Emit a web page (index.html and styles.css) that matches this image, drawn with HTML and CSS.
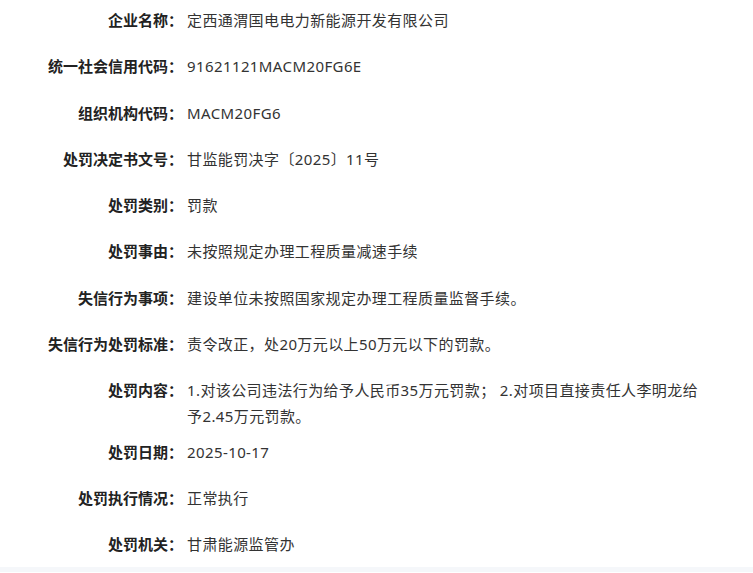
FILE: index.html
```html
<!DOCTYPE html>
<html lang="zh-CN">
<head>
	<meta charset="UTF-8">
	<title>行政处罚信息</title>
	<link rel="stylesheet" href="styles.css">
</head>
<body>
	<div class="detail">
		<div class="row"><span class="label">企业名称：</span><span class="value">定西通渭国电电力新能源开发有限公司</span></div>
		<div class="row"><span class="label">统一社会信用代码：</span><span class="value">91621121MACM20FG6E</span></div>
		<div class="row"><span class="label">组织机构代码：</span><span class="value">MACM20FG6</span></div>
		<div class="row"><span class="label">处罚决定书文号：</span><span class="value">甘监能罚决字〔2025〕11号</span></div>
		<div class="row"><span class="label">处罚类别：</span><span class="value">罚款</span></div>
		<div class="row"><span class="label">处罚事由：</span><span class="value">未按照规定办理工程质量减速手续</span></div>
		<div class="row"><span class="label">失信行为事项：</span><span class="value">建设单位未按照国家规定办理工程质量监督手续。</span></div>
		<div class="row"><span class="label">失信行为处罚标准：</span><span class="value">责令改正，处20万元以上50万元以下的罚款。</span></div>
		<div class="row"><span class="label">处罚内容：</span><span class="value">1.对该公司违法行为给予人民币35万元罚款；&nbsp;2.对项目直接责任人李明龙给予2.45万元罚款。</span></div>
		<div class="row"><span class="label">处罚日期：</span><span class="value">2025-10-17</span></div>
		<div class="row"><span class="label">处罚执行情况：</span><span class="value">正常执行</span></div>
		<div class="row"><span class="label">处罚机关：</span><span class="value">甘肃能源监管办</span></div>
	</div>
	<div class="foot"></div>
</body>
</html>
```

FILE: styles.css
```css
*{margin:0;padding:0;}
body{background:#fff;font-family:"Noto Sans","Noto Sans CJK SC",sans-serif;font-size:15px;color:#333;}
.detail{width:705px;padding-top:7px;}
.row{display:flex;align-items:flex-start;min-height:37px;margin-bottom:9.3px;line-height:26px;}
.row:last-child{min-height:36px;margin-bottom:0;}
.label{flex:0 0 183px;text-align:right;font-weight:bold;color:#222;}
.value{flex:1;margin-left:4px;letter-spacing:0.4px;}
.foot{height:5px;background:#f5f7fa;}
```
